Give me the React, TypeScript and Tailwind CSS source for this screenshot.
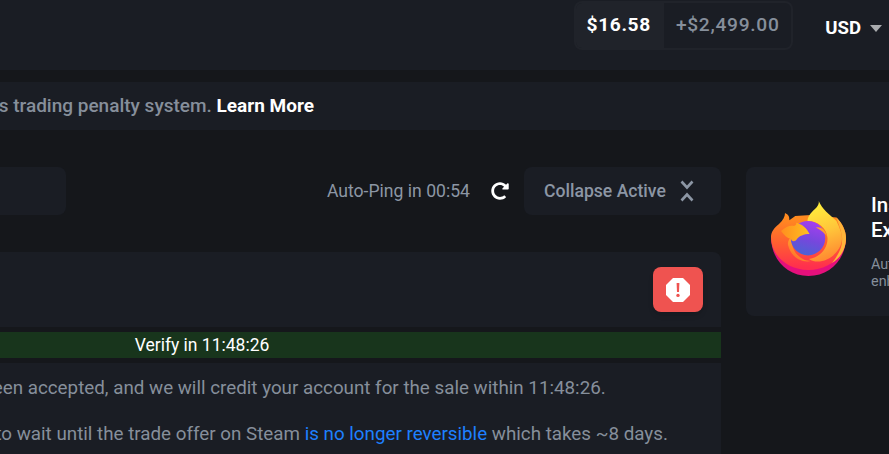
import { FaRedoAlt } from "react-icons/fa";

function FirefoxLogo() {
  return (
    <svg viewBox="0 0 75 75" className="mb-[6px] h-[75px] w-[75px] shrink-0" aria-hidden>
      <defs>
        <linearGradient id="ffBody" x1="0.5" y1="0.1" x2="0.5" y2="0.95">
          <stop offset="0" stopColor="#ff8a20" />
          <stop offset="0.5" stopColor="#ff5f30" />
          <stop offset="1" stopColor="#ff2f4e" />
        </linearGradient>
        <linearGradient id="ffFlame" x1="0.4" y1="0" x2="0.6" y2="1">
          <stop offset="0" stopColor="#fff03c" />
          <stop offset="0.5" stopColor="#ffc53a" />
          <stop offset="1" stopColor="#ff8530" />
        </linearGradient>
        <linearGradient id="ffHead" x1="0" y1="0.5" x2="1" y2="0.5">
          <stop offset="0" stopColor="#ff8f1f" />
          <stop offset="1" stopColor="#ffc020" />
        </linearGradient>
        <linearGradient id="ffSwirl" x1="0.7" y1="0.1" x2="0.2" y2="0.9">
          <stop offset="0" stopColor="#ffb52e" />
          <stop offset="1" stopColor="#ff6f2a" />
        </linearGradient>
        <linearGradient id="ffGlobe" x1="0.65" y1="0" x2="0.35" y2="1">
          <stop offset="0" stopColor="#a63ef0" />
          <stop offset="0.55" stopColor="#7548dc" />
          <stop offset="1" stopColor="#4a63d2" />
        </linearGradient>
      </defs>
      <path d="M0 36C0 58 16 75 37.5 75C59 75 75 58 75 36Z" fill="#e5107c" />
      <path
        d="M14 12C14 16 12 19 8 23C3 27 0 31 0 36C0 55 17 69 37.5 69C58 69 75 55 75 37C75 29 71 22 65.500 16.500L40 14L24.300 15L18.300 19.300C18.500 16 18 14 14 12Z"
        fill="url(#ffBody)"
      />
      <path
        d="M47.700 0C49 6 41 9 38 15C37 17 36.500 18 36.500 20C47 20 56 27 56.500 37C57 46 50 56 38 58C50 66 70 54 71 38C71 31 68 26 65.500 20C58 13 51 8 47.700 0Z"
        fill="url(#ffFlame)"
      />
      <path d="M65.500 16.500C71 22 75 30 75 37C75 49 69 57 61 62C68 53 72 45 71 36C70 28 67 22 65.500 16.500Z" fill="#ffb53a" />
      <path
        d="M21 36C19 48 28 60 40 60C30 62 20 56 17 44C16.500 41 18 37 21 36Z"
        fill="url(#ffSwirl)"
      />
      <circle cx="37" cy="37.200" r="17.200" fill="url(#ffGlobe)" />
      <path
        d="M10 30C15 25 20 24 23 25C25 24 26 23 25 21.700C31 23 36 27 38.500 33C33 33 28 35 26 38C24 41 21 41 20 38C16 37 13 34 10 30Z"
        fill="url(#ffHead)"
      />
      <path d="M45 26.500C50 25.500 54 29 56 35C53 32 50 29 45 26.500Z" fill="#ffa030" />
    </svg>
  );
}

function CollapseIcon() {
  return (
    <svg viewBox="0 0 14 22" className="h-[22px] w-3.5" fill="none" stroke="currentColor" strokeWidth="2.6" aria-hidden>
      <path d="M1.500 1.500 L7 7.500 L12.500 1.500" />
      <path d="M1.500 20.500 L7 14.500 L12.500 20.500" />
    </svg>
  );
}

function AlertIcon() {
  return (
    <svg viewBox="0 0 24 24" className="h-6 w-6" aria-hidden>
      <path d="M7 0H17L24 7V17L17 24H7L0 17V7Z" fill="#fff" />
      <path d="M10.600 5H13.400L13 14H11Z" fill="#ef5350" />
      <circle cx="12" cy="17.400" r="1.700" fill="#ef5350" />
    </svg>
  );
}

export default function App() {
  return (
    <div className="h-[454px] w-[889px] overflow-hidden bg-[#15171b] font-['Roboto',sans-serif]">
      <header className="flex h-[70px] items-start justify-end bg-[#1a1d24] pr-[7px]">
        <div className="mt-px flex h-[49px] w-[219px] overflow-hidden rounded-lg border-2 border-[#20232a]">
          <div className="flex w-[88px] items-center justify-center bg-[#20232a] pr-[3px] text-[19.2px] font-bold tracking-[0.6px] text-white">
            $16.58
          </div>
          <div className="flex flex-1 items-center justify-center text-[19.2px] font-medium tracking-[0.7px] text-[#868f9b]">
            +$2,499.00
          </div>
        </div>
        <div className="ml-[32px] mt-[15px] flex items-center gap-[9px] text-[18.6px] font-bold text-white">
          USD
          <svg viewBox="0 0 12 7" className="h-[7px] w-3" aria-hidden>
            <path d="M0 0H12L6 7Z" fill="#a9abae" />
          </svg>
        </div>
      </header>

      <div className="mt-3 flex h-12 items-center justify-end whitespace-nowrap bg-[#1a1d24] pr-[575px] text-[19px] font-medium text-[#868f9b]">
        <span>
          Learn more about Steam's trading penalty system. <a className="font-bold text-white">Learn More</a>
        </span>
      </div>

      <div className="mt-[37px] flex items-start gap-[25px]">
        <main className="-ml-[317px] w-[1038px] shrink-0">
          <div className="flex h-12 items-center">
            <div className="h-full w-[383px] rounded-lg bg-[#1a1d24]" />
            <span className="ml-auto text-[17.6px] text-[#8c96a4]">Auto-Ping in 00:54</span>
            <FaRedoAlt className="ml-[21px] h-[18px] w-[18px] text-white" />
            <button className="ml-[15px] flex h-12 w-[197px] items-center rounded-lg bg-[#1a1d24] pl-5 text-[17.6px] font-medium text-[#8c96a4]">
              Collapse Active
              <span className="ml-[14px]">
                <CollapseIcon />
              </span>
            </button>
          </div>

          <section className="mt-[37px] overflow-hidden rounded-lg">
            <div className="flex h-[75px] items-start justify-end bg-[#1a1d24] pr-[18px] pt-[15px]">
              <button className="flex h-[45px] w-[50px] items-center justify-center rounded-lg bg-[#ef5350] shadow-md">
                <AlertIcon />
              </button>
            </div>
            <div className="mt-[5px] flex h-[26px] items-center justify-center bg-[#18351c] text-[17.5px] text-white">
              Verify in 11:48:26
            </div>
            <div className="mt-[5px] bg-[#1a1d24] pb-6 pl-[174px] pt-0.5 text-[18.8px] leading-[46px] text-[#868f9b]">
              <p className="whitespace-nowrap">
                Your trade has been accepted, and we will credit your account for the sale within 11:48:26.
              </p>
              <p className="-ml-4 whitespace-nowrap">
                You will then have to wait until the trade offer on Steam{" "}
                <a className="text-[#1e80ff]">is no longer reversible</a> which takes ~8 days.
              </p>
            </div>
          </section>
        </main>

        <aside className="flex h-[149px] w-[420px] shrink-0 items-center rounded-lg bg-[#1a1d24] pl-[25px]">
          <FirefoxLogo />
          <div className="ml-[25px] whitespace-nowrap">
            <h3 className="text-[20.5px] font-medium leading-[25px] text-white">
              Install Our
              <br />
              Extension
            </h3>
            <p className="mt-[13px] text-[14.4px] leading-[17px] text-[#868f9b]">
              Automatically accept trades and
              <br />
              enhance your experience
            </p>
          </div>
        </aside>
      </div>
    </div>
  );
}
